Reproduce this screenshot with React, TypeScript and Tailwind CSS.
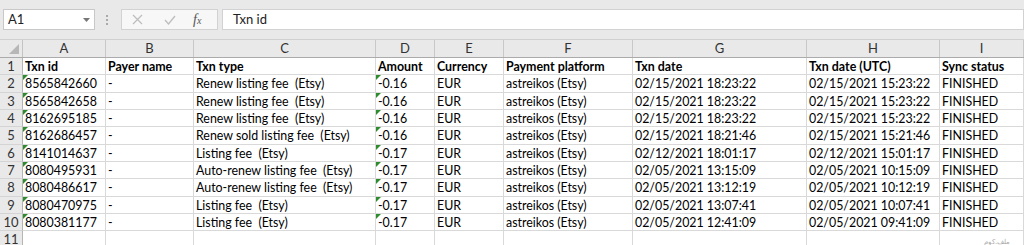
import React from "react";

const cols = ["A", "B", "C", "D", "E", "F", "G", "H", "I"];
const header = ["Txn id", "Payer name", "Txn type", "Amount", "Currency", "Payment platform", "Txn date", "Txn date (UTC)", "Sync status"];
const rows: string[][] = [
  ["8565842660", "-", "Renew listing fee  (Etsy)", "-0.16", "EUR", "astreikos (Etsy)", "02/15/2021 18:23:22", "02/15/2021 15:23:22", "FINISHED"],
  ["8565842658", "-", "Renew listing fee  (Etsy)", "-0.16", "EUR", "astreikos (Etsy)", "02/15/2021 18:23:22", "02/15/2021 15:23:22", "FINISHED"],
  ["8162695185", "-", "Renew listing fee  (Etsy)", "-0.16", "EUR", "astreikos (Etsy)", "02/15/2021 18:23:22", "02/15/2021 15:23:22", "FINISHED"],
  ["8162686457", "-", "Renew sold listing fee  (Etsy)", "-0.16", "EUR", "astreikos (Etsy)", "02/15/2021 18:21:46", "02/15/2021 15:21:46", "FINISHED"],
  ["8141014637", "-", "Listing fee  (Etsy)", "-0.17", "EUR", "astreikos (Etsy)", "02/12/2021 18:01:17", "02/12/2021 15:01:17", "FINISHED"],
  ["8080495931", "-", "Auto-renew listing fee  (Etsy)", "-0.17", "EUR", "astreikos (Etsy)", "02/05/2021 13:15:09", "02/05/2021 10:15:09", "FINISHED"],
  ["8080486617", "-", "Auto-renew listing fee  (Etsy)", "-0.17", "EUR", "astreikos (Etsy)", "02/05/2021 13:12:19", "02/05/2021 10:12:19", "FINISHED"],
  ["8080470975", "-", "Listing fee  (Etsy)", "-0.17", "EUR", "astreikos (Etsy)", "02/05/2021 13:07:41", "02/05/2021 10:07:41", "FINISHED"],
  ["8080381177", "-", "Listing fee  (Etsy)", "-0.17", "EUR", "astreikos (Etsy)", "02/05/2021 12:41:09", "02/05/2021 09:41:09", "FINISHED"],
];

const gridCols = "grid grid-cols-[23px_83px_88px_182px_59px_69px_129px_174px_133px_1fr]";

function Cell({ text, bold, tri }: { text: string; bold?: boolean; tri?: boolean }) {
  return (
    <div className="relative h-[17.35px] border-r border-b border-[#d9d9d9] pl-[2px] leading-[17px] text-[12.4px] text-black whitespace-pre overflow-hidden">
      {tri && (
        <div className="absolute left-0 top-0 w-0 h-0 border-t-[5px] border-t-[#2e8b2e] border-r-[5px] border-r-transparent" />
      )}
      <span className={bold ? "font-bold" : ""}>{text}</span>
    </div>
  );
}

function RowHead({ n }: { n: number }) {
  return (
    <div className="h-[17.35px] bg-[#e9e9e9] border-r border-r-[#b5b5b5] border-b border-b-[#d4d4d4] text-center leading-[17px] text-[13px] text-[#333]">
      {n}
    </div>
  );
}

export default function App() {
  return (
    <div className="w-[1024px] h-[245px] overflow-hidden bg-white" style={{ fontFamily: "Lato, 'Liberation Sans', sans-serif" }}>
      {/* formula bar */}
      <div className="h-[40px] bg-[#e9e9e9] flex items-center border-b border-[#d0d0d0]">
        <div className="ml-[3px] w-[92px] h-[21px] bg-white border border-[#c8c8c8] flex items-center justify-between px-[4px]">
          <span className="text-[13px] text-[#222]">A1</span>
          <svg width="7" height="4" viewBox="0 0 7 4"><path d="M0 0 L7 0 L3.5 4 Z" fill="#777" /></svg>
        </div>
        <div className="ml-[11px] flex flex-col gap-[2px]">
          <div className="w-[2px] h-[2px] bg-[#aaa]" />
          <div className="w-[2px] h-[2px] bg-[#aaa]" />
          <div className="w-[2px] h-[2px] bg-[#aaa]" />
        </div>
        <div className="ml-[13px] w-[97px] h-[21px] bg-[#f7f7f7] border border-[#d2d2d2] flex items-center">
          <svg className="ml-[10px]" width="11" height="11" viewBox="0 0 11 11"><path d="M1 1 L10 10 M10 1 L1 10" stroke="#bdbdbd" strokeWidth="1.2" /></svg>
          <svg className="ml-[21px]" width="12" height="10" viewBox="0 0 12 10"><path d="M1 5 L4.5 9 L11 1" stroke="#bdbdbd" strokeWidth="1.3" fill="none" /></svg>
          <span className="ml-[17px] text-[14px] italic text-[#555]" style={{ fontFamily: "'Liberation Serif', serif" }}>f<span className="text-[10px]">x</span></span>
        </div>
        <div className="ml-[4px] flex-1 h-[21px] bg-white border border-[#d2d2d2] flex items-center pl-[10px] text-[13px] text-[#222]">
          Txn id
        </div>
      </div>

      {/* column headers */}
      <div className={gridCols + " h-[18px] bg-[#e9e9e9] border-b border-[#ababab]"}>
        <div className="relative border-r border-[#c4c4c4]">
          <div className="absolute right-[3px] bottom-[3px] w-0 h-0 border-l-[10px] border-l-transparent border-b-[10px] border-b-[#b7b7b7]" />
        </div>
        {cols.map((c) => (
          <div key={c} className="border-r border-[#c8c8c8] text-center text-[13px] leading-[17px] text-[#333]">{c}</div>
        ))}
      </div>

      {/* data */}
      <div className={gridCols}>
        <RowHead n={1} />
        {header.map((h, i) => <Cell key={i} text={h} bold />)}
        {rows.map((r, ri) => (
          <React.Fragment key={ri}>
            <RowHead n={ri + 2} />
            {r.map((v, ci) => <Cell key={ci} text={v} tri={ci === 0 || ci === 3} />)}
          </React.Fragment>
        ))}
        <RowHead n={11} />
        {cols.map((c) => <Cell key={c} text="" />)}
      </div>
      <div className="relative">
        <span className="absolute right-[14px] -top-[13px] text-[7px] text-[#aaa]">ملف.كوم</span>
      </div>
    </div>
  );
}
